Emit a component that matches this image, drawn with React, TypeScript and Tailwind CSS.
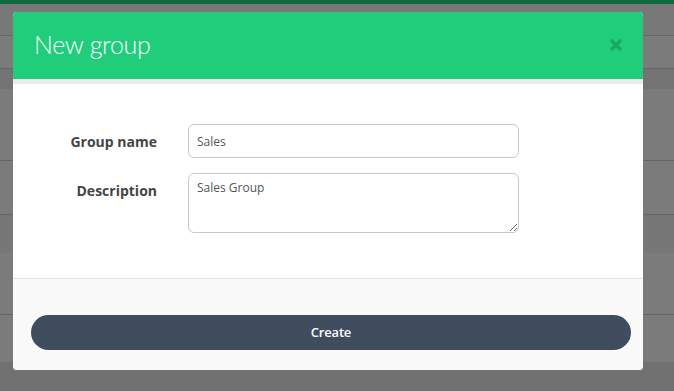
export default function App() {
  const rows = [
    { h: "h-[32px]", c: "bg-[#787878] border-b border-[#666]" },
    { h: "h-[33px]", c: "bg-[#7b7b7b] border-b border-[#666]" },
    { h: "h-[20px]", c: "bg-[#737373]" },
    { h: "h-[72px]", c: "bg-[#7b7b7b] border-b border-[#666]" },
    { h: "h-[54px]", c: "bg-[#7b7b7b] border-b border-[#666]" },
    { h: "h-[38px]", c: "bg-[#777777]" },
    { h: "h-[62px]", c: "bg-[#7b7b7b] border-b border-[#666]" },
    { h: "h-[47px]", c: "bg-[#7b7b7b]" },
    { h: "h-[30px]", c: "bg-[#717171]" },
  ];

  return (
    <div className="relative w-[674px] h-[391px] overflow-hidden bg-[#787878] font-['Open_Sans',sans-serif]">
      <div className="h-[4px] bg-[#0f6a40]" />
      {rows.map((r, i) => (
        <div key={i} className={`${r.h} ${r.c}`} />
      ))}

      <div className="absolute left-[13px] top-[12px] w-[630px] rounded-[4px] overflow-hidden bg-white">
        <div className="h-[67px] bg-[#20cd7b] flex items-center justify-between pl-[21px] pr-[20px]">
          <h2 className="text-white text-[25px] font-light font-['Lato',sans-serif] tracking-[-0.3px] leading-none mt-[-2px]">
            New group
          </h2>
          <svg width="14" height="14" viewBox="0 0 14 14" className="mt-[-1px]">
            <path d="M2 2 L12 12 M12 2 L2 12" stroke="#17a862" strokeWidth="3.2" strokeLinecap="butt" />
          </svg>
        </div>
        <div className="h-[5px] bg-[#ebebeb]" />
        <div className="pt-[40px] pb-[45px] flex flex-col gap-[15px]">
          <div className="flex items-center">
            <label className="w-[144px] text-right text-[14px] font-bold text-[#444]">
              Group name
            </label>
            <input
              defaultValue="Sales"
              className="ml-[31px] w-[331px] h-[34px] rounded-[6px] border border-[#c8c8c8] px-[8px] text-[12px] text-[#555] outline-none"
            />
          </div>
          <div className="flex items-start">
            <label className="w-[144px] text-right text-[14px] font-bold text-[#444] pt-[7px]">
              Description
            </label>
            <textarea
              defaultValue="Sales Group"
              className="ml-[31px] w-[331px] h-[60px] rounded-[6px] border border-[#c8c8c8] px-[8px] py-[5px] text-[12px] text-[#555] outline-none"
            />
          </div>
        </div>
        <div className="border-t border-[#e5e5e5] bg-[#f9f9f9] pt-[36px] pb-[20px] pl-[18px] pr-[12px]">
          <button className="w-full h-[35px] rounded-full bg-[#3f4d5f] text-white text-[13px] font-semibold tracking-[-0.2px]">
            Create
          </button>
        </div>
      </div>
    </div>
  );
}
